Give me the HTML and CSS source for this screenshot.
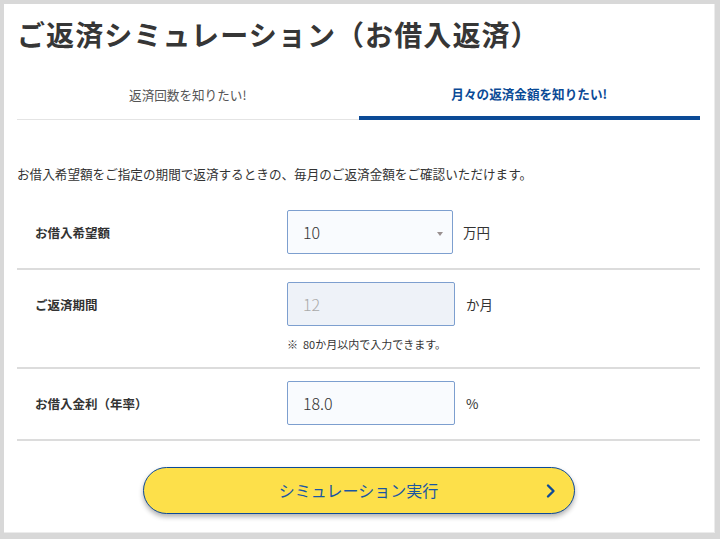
FILE: index.html
```html
<!DOCTYPE html>
<html lang="ja">
<head>
<meta charset="utf-8">
<title>ご返済シミュレーション</title>
<link rel="stylesheet" href="styles.css">
</head>
<body>
<div class="card">
  <h1 class="title">ご返済シミュレーション（お借入返済）</h1>
  <div class="tabs">
    <div class="tab">返済回数を知りたい!</div>
    <div class="tab tab-active">月々の返済金額を知りたい!</div>
  </div>
  <p class="desc">お借入希望額をご指定の期間で返済するときの、毎月のご返済金額をご確認いただけます。</p>
  <div class="form">
    <div class="row row-first">
      <div class="label">お借入希望額</div>
      <div class="field">
        <div class="line">
          <div class="box select">
            <span class="val">10</span>
            <span class="caret"></span>
          </div>
          <span class="unit unit-select">万円</span>
        </div>
      </div>
    </div>
    <div class="row">
      <div class="label">ご返済期間</div>
      <div class="field">
        <div class="line">
          <div class="box input disabled"><span class="val">12</span></div>
          <span class="unit">か月</span>
        </div>
        <div class="note">※&nbsp; 80か月以内で入力できます。</div>
      </div>
    </div>
    <div class="row row-last">
      <div class="label">お借入金利（年率）</div>
      <div class="field">
        <div class="line">
          <div class="box input"><span class="val">18.0</span></div>
          <span class="unit">%</span>
        </div>
      </div>
    </div>
  </div>
  <div class="actions">
    <button class="btn" type="button">
      <span class="btn-label">シミュレーション実行</span>
      <svg class="chev" width="12" height="16" viewBox="0 0 12 16"><path d="M3 2.5 L8.5 8 L3 13.5" fill="none" stroke="#0d4a98" stroke-width="2.4" stroke-linecap="round" stroke-linejoin="round"/></svg>
    </button>
  </div>
</div>
</body>
</html>
```
FILE: styles.css
```css
html, body {
  margin: 0;
  padding: 0;
}
body {
  background: #d8d8d8;
  padding: 4px 4px 0 4px;
  font-family: "Noto Sans CJK JP", "Noto Sans", sans-serif;
  color: #333;
}
.card {
  background: #fff;
  width: 711px;
  height: 529px;
  box-sizing: border-box;
  padding: 10px 14px 0 13px;
  border-right: 1px solid #ececec;
  border-bottom: 1px solid #ececec;
}
.title {
  margin: 0;
  font-size: 28px;
  line-height: 40px;
  font-weight: 700;
  color: #363636;
  letter-spacing: 1.1px;
}
.tabs {
  display: flex;
  margin-top: 12px;
}
.tab {
  flex: 1;
  height: 54px;
  box-sizing: border-box;
  padding-top: 4px;
  display: flex;
  align-items: center;
  justify-content: center;
  font-size: 12.6px;
  color: #555;
  border-bottom: 1px solid #e4e4e4;
}
.tab-active {
  color: #0b4a96;
  font-weight: 700;
  border-bottom: 4px solid #0b4a96;
}
.desc {
  margin: 45px 0 15px 0;
  font-size: 12.6px;
  line-height: 18px;
  color: #333;
}
.row {
  display: flex;
  padding: 12px 0 14px 0;
  border-bottom: 2px solid #dcdcdc;
}
.row-first {
  padding-top: 12px;
}
.label {
  width: 252px;
  padding-left: 18px;
  height: 44px;
  display: flex;
  align-items: center;
  font-size: 12.5px;
  font-weight: 700;
  color: #333;
}
.field {
  display: flex;
  flex-direction: column;
}
.line {
  display: flex;
  align-items: center;
}
.box {
  height: 44px;
  box-sizing: border-box;
  border: 1px solid #7d9fcf;
  border-radius: 2px;
  background: #f9fbfe;
  display: flex;
  align-items: center;
  padding-left: 15px;
  font-size: 16px;
  font-weight: 300;
  color: #333;
}
.select {
  width: 166px;
  position: relative;
}
.input {
  width: 168px;
}
.disabled {
  background: #eef2f8;
  color: #aaa;
}
.caret {
  position: absolute;
  right: 9px;
  top: 21px;
  width: 0;
  height: 0;
  border-left: 3px solid transparent;
  border-right: 3px solid transparent;
  border-top: 4px solid #9a9090;
}
.unit {
  margin-left: 11px;
  font-size: 13.5px;
  color: #333;
}
.unit-select {
  margin-left: 10px;
}
.note {
  margin-top: 10px;
  font-size: 11px;
  line-height: 16px;
  color: #333;
  height: 17px;
}
.actions {
  display: flex;
  justify-content: center;
  padding-top: 26px;
}
.btn {
  position: relative;
  width: 432px;
  height: 47px;
  border-radius: 24px;
  border: 1.5px solid #0d4a98;
  background: #fde04a;
  box-shadow: 0 3px 5px rgba(0, 0, 0, 0.3);
  display: flex;
  align-items: center;
  justify-content: center;
  font-family: "Noto Sans CJK JP", "Noto Sans", sans-serif;
  font-size: 16px;
  color: #1a56a2;
  padding: 0;
}
.btn-label {
  padding-bottom: 2px;
}
.chev {
  position: absolute;
  right: 17px;
  top: 15px;
}
```
